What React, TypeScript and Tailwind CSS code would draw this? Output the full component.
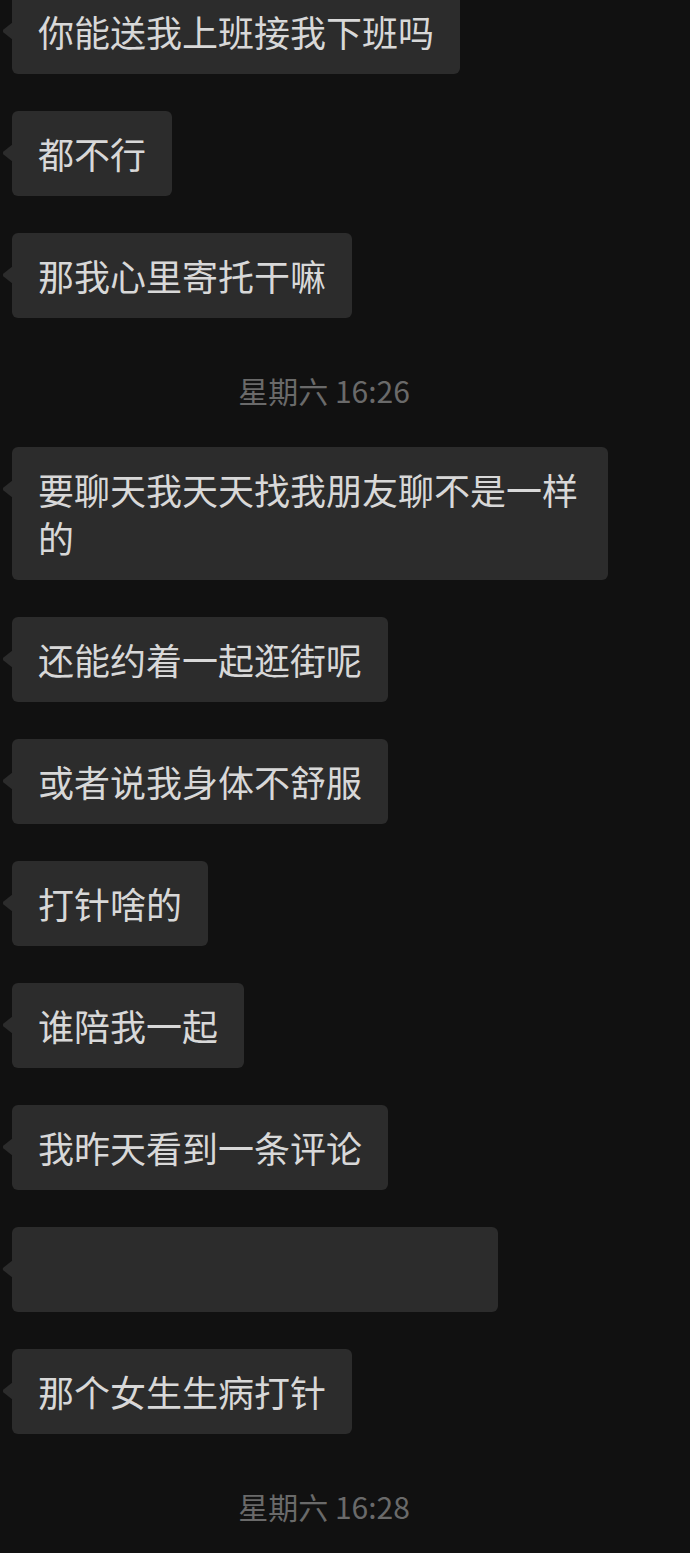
import React from "react";

const font = { fontFamily: '"Noto Sans CJK SC", "Noto Sans", sans-serif' };

function Bubble({ text, width }: { text?: string; width?: string }) {
  return (
    <div className="pl-[12px]">
      <div
        className={`relative inline-block max-w-[596px] rounded-[6px] bg-[#2c2c2c] px-[26px] pt-[17.5px] pb-[19.5px] text-[36px] leading-[48px] text-[#d8d8d8] ${width ?? ""}`}
      >
        <svg
          className="absolute left-[-10px] top-[33px]"
          width="11"
          height="18"
          viewBox="0 0 11 18"
        >
          <path d="M11 0 L1.5 7.6 Q0 9 1.5 10.4 L11 18 Z" fill="#2c2c2c" />
        </svg>
        {text ? text : <span>&nbsp;</span>}
      </div>
    </div>
  );
}

function Stamp({ text }: { text: string }) {
  return (
    <div className="pt-[19px] pb-[4px] pr-[42px] text-center text-[30px] leading-[32px] text-[#6a6a6a]">
      {text}
    </div>
  );
}

export default function App() {
  return (
    <div className="min-h-[1553px] overflow-hidden bg-[#111111]" style={font}>
      <div className="mt-[-11px] flex flex-col gap-[37px]">
        <Bubble text="你能送我上班接我下班吗" />
        <Bubble text="都不行" />
        <Bubble text="那我心里寄托干嘛" />
        <Stamp text="星期六 16:26" />
        <Bubble text="要聊天我天天找我朋友聊不是一样的" />
        <Bubble text="还能约着一起逛街呢" />
        <Bubble text="或者说我身体不舒服" />
        <Bubble text="打针啥的" />
        <Bubble text="谁陪我一起" />
        <Bubble text="我昨天看到一条评论" />
        <Bubble width="w-[486px]" />
        <Bubble text="那个女生生病打针" />
        <Stamp text="星期六 16:28" />
      </div>
    </div>
  );
}
